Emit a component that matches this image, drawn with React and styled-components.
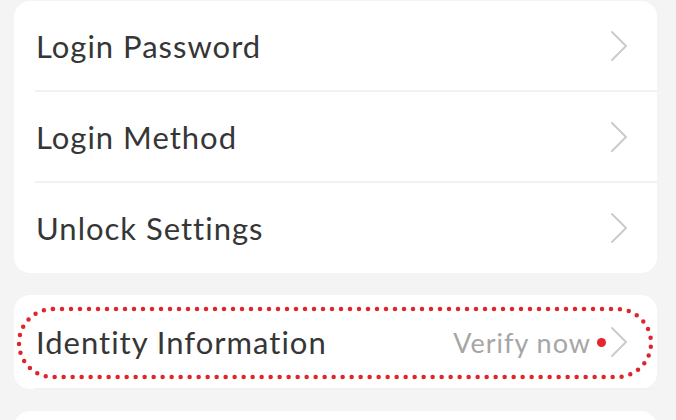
import React from "react";
import styled, { createGlobalStyle } from "styled-components";

const Global = createGlobalStyle`
  html, body { margin: 0; padding: 0; background: #f4f4f4; }
  body { font-family: "Lato", "Noto Sans", sans-serif; -webkit-font-smoothing: antialiased; }
  #root { width: 676px; height: 420px; overflow: hidden; }
`;

const Page = styled.div`
  display: flex;
  flex-direction: column;
  gap: 22px;
  padding: 1px 19px 0 14px;
`;

const Card = styled.div`
  position: relative;
  background: #ffffff;
  border-radius: 16px;
  display: flex;
  flex-direction: column;
  min-height: ${(p) => p.$minHeight || 0}px;
`;

const Row = styled.div`
  position: relative;
  height: ${(p) => p.$height || 90}px;
  display: flex;
  align-items: center;
  padding: 0 29px 0 22px;
  &:not(:last-child)::after {
    content: "";
    position: absolute;
    left: 21px;
    right: 0;
    bottom: -1px;
    height: 2px;
    background: #f1f1f1;
  }
  & + & { margin-top: 1px; }
`;

const Label = styled.span`
  flex: 1;
  font-size: 31px;
  color: #363636;
  letter-spacing: 1px;
`;

const Hint = styled.span`
  font-size: 27px;
  color: #a6a6a6;
  letter-spacing: 1px;
  margin-right: 6px;
`;

const Dot = styled.span`
  width: 9px;
  height: 9px;
  border-radius: 50%;
  background: #e3262b;
  margin-right: 4px;
`;

const Outline = styled.svg`
  position: absolute;
  left: 2px;
  top: 11px;
  pointer-events: none;
`;

const Chevron = () => (
  <svg width="18" height="32" viewBox="0 0 18 32" fill="none">
    <path d="M2 2 L16 16 L2 30" stroke="#cbcbcb" strokeWidth="2" strokeLinecap="round" strokeLinejoin="round" />
  </svg>
);

export default function App() {
  return (
    <>
      <Global />
      <Page>
        <Card>
          <Row><Label>Login Password</Label><Chevron /></Row>
          <Row><Label>Login Method</Label><Chevron /></Row>
          <Row><Label>Unlock Settings</Label><Chevron /></Row>
        </Card>
        <Card>
          <Row $height={94}>
            <Label>Identity Information</Label>
            <Hint>Verify now</Hint>
            <Dot />
            <Chevron />
          </Row>
          <Outline width="638" height="74" viewBox="0 0 638 74">
            <rect x="3" y="3" width="632" height="68" rx="34" fill="none" stroke="#e0242a" strokeWidth="4.5" strokeDasharray="0 9" strokeLinecap="round" />
          </Outline>
        </Card>
        <Card $minHeight={60} />
      </Page>
    </>
  );
}
